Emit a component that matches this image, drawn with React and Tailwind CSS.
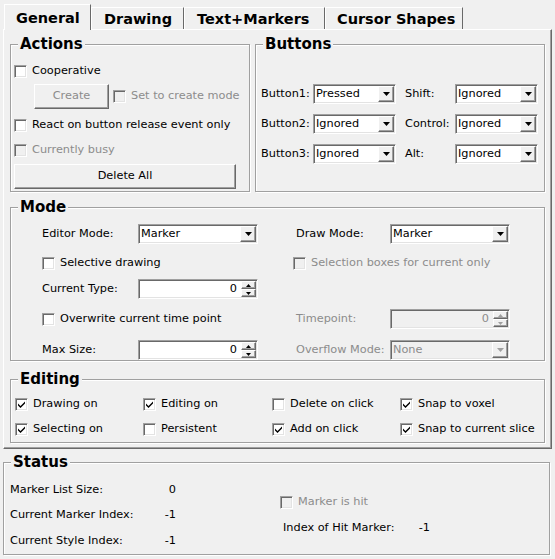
import React from 'react';

const sunken =
  'border border-t-[#a0a0a0] border-l-[#a0a0a0] border-b-white border-r-white shadow-[inset_1px_1px_0_#696969,inset_-1px_-1px_0_#e3e3e3]';
const raised =
  'border border-t-white border-l-white border-b-[#696969] border-r-[#696969] shadow-[inset_-1px_-1px_0_#a0a0a0]';

function Box({ checked, disabled }) {
  return (
    <span
      className={`w-[13px] h-[13px] shrink-0 flex items-center justify-center ${sunken} ${
        disabled ? 'bg-[#f0f0f0]' : 'bg-white'
      }`}
    >
      {checked && (
        <svg width="7" height="7" viewBox="0 0 7 7">
          <polygon points="0,2.5 2.5,5 7,0.5 7,2.5 2.5,7 0,4.5" fill="#000" />
        </svg>
      )}
    </span>
  );
}

function Check({ label, checked, disabled, className = '' }) {
  return (
    <div className={`flex items-center gap-[5px] h-[20px] ${className}`}>
      <Box checked={checked} disabled={disabled} />
      <span className={disabled ? 'text-[#8c8c8c]' : 'text-black'}>{label}</span>
    </div>
  );
}

function Arrow({ disabled }) {
  return (
    <svg width="7" height="4" viewBox="0 0 7 4">
      <polygon points="0,0 7,0 3.5,4" fill={disabled ? '#a0a0a0' : '#000'} />
    </svg>
  );
}

function Combo({ value, width, disabled }) {
  return (
    <div
      className={`h-[20px] flex items-center shrink-0 ${sunken} ${disabled ? 'bg-[#f0f0f0]' : 'bg-white'}`}
      style={{ width }}
    >
      <span className={`flex-1 pl-[2px] ${disabled ? 'text-[#8c8c8c]' : 'text-black'}`}>{value}</span>
      <span className={`w-[16px] h-[16px] mr-px flex items-center justify-center bg-[#f0f0f0] ${raised}`}>
        <Arrow disabled={disabled} />
      </span>
    </div>
  );
}

function Spin({ value, width, disabled }) {
  return (
    <div
      className={`h-[20px] flex items-center shrink-0 ${sunken} ${disabled ? 'bg-[#f0f0f0]' : 'bg-white'}`}
      style={{ width }}
    >
      <span className={`flex-1 text-right pr-[4px] ${disabled ? 'text-[#8c8c8c]' : 'text-black'}`}>{value}</span>
      <span className="w-[15px] h-[16px] mr-px flex flex-col">
        <span className={`h-[8px] flex items-center justify-center bg-[#f0f0f0] ${raised}`}>
          <svg width="5" height="3" viewBox="0 0 5 3">
            <polygon points="0,3 5,3 2.5,0" fill={disabled ? '#a0a0a0' : '#000'} />
          </svg>
        </span>
        <span className={`h-[8px] flex items-center justify-center bg-[#f0f0f0] ${raised}`}>
          <svg width="5" height="3" viewBox="0 0 5 3">
            <polygon points="0,0 5,0 2.5,3" fill={disabled ? '#a0a0a0' : '#000'} />
          </svg>
        </span>
      </span>
    </div>
  );
}

function Group({ title, className = '', children }) {
  return (
    <div
      className={`relative border border-[#a0a0a0] shadow-[1px_1px_0_#fff,inset_1px_1px_0_#fff] ${className}`}
    >
      <span className="absolute top-[-10px] left-[7px] px-[2px] bg-[#f0f0f0] font-bold text-[15px] leading-[18px] text-black">
        {title}
      </span>
      {children}
    </div>
  );
}

function Tab({ label, width, pl, active }) {
  return (
    <div
      className={`flex items-center pt-[2px] bg-[#f0f0f0] border-t border-l border-white border-r border-r-[#696969] font-bold text-[14.5px] text-black ${
        active ? 'h-[26px] -mb-px relative z-10' : 'h-[22px]'
      }`}
      style={{ width, paddingLeft: pl }}
    >
      {label}
    </div>
  );
}

export default function App() {
  return (
    <div className="w-[555px] h-[559px] bg-[#f0f0f0] font-['DejaVu_Sans',sans-serif] text-[11.3px] text-black flex flex-col overflow-hidden select-none">
      {/* tabs */}
      <div className="h-[29px] flex items-end pl-[4px] shrink-0">
        <Tab label="General" width={87} pl={11} active />
        <Tab label="Drawing" width={93} pl={12} />
        <Tab label="Text+Markers" width={141} pl={12} />
        <Tab label="Cursor Shapes" width={138} pl={11} />
      </div>

      {/* tab panel */}
      <div className="ml-[3px] w-[549px] h-[420px] shrink-0 border-t border-l border-white border-r border-b border-r-[#696969] border-b-[#696969] shadow-[inset_-1px_-1px_0_#a0a0a0] pl-[6px] pt-[14px]">
        <div className="flex gap-[5px]">
          <Group title="Actions" className="w-[240px] h-[148px]">
            <div className="flex flex-col pl-[3px]">
              <Check label="Cooperative" className="mt-[16px]" />
              <div className="mt-[3px] h-[25px] flex items-center">
                <div className={`ml-[20px] w-[75px] h-[25px] flex items-center justify-center text-[#8c8c8c] ${raised}`}>
                  Create
                </div>
                <Check label="Set to create mode" disabled className="ml-[4px]" />
              </div>
              <Check label="React on button release event only" className="mt-[6px]" />
              <Check label="Currently busy" disabled className="mt-[5px]" />
              <div className={`mt-[4px] w-[222px] h-[25px] flex items-center justify-center ${raised}`}>
                Delete All
              </div>
            </div>
          </Group>

          <Group title="Buttons" className="w-[290px] h-[148px]">
            <div className="flex flex-col pl-[5px] pt-[39px] gap-[10px]">
              {[
                ['Button1:', 'Pressed', 'Shift:'],
                ['Button2:', 'Ignored', 'Control:'],
                ['Button3:', 'Ignored', 'Alt:'],
              ].map(([a, v, b]) => (
                <div key={a} className="flex items-center h-[20px]">
                  <span className="w-[52px]">{a}</span>
                  <Combo value={v} width={83} />
                  <span className="ml-[9px] w-[50px]">{b}</span>
                  <Combo value="Ignored" width={83} />
                </div>
              ))}
            </div>
          </Group>
        </div>

        <Group title="Mode" className="mt-[15px] w-[535px] h-[154px]">
          <div className="flex flex-col pl-[31px]">
            <div className="mt-[16px] h-[20px] flex items-center">
              <div className="w-[254px] flex items-center">
                <span className="w-[96px]">Editor Mode:</span>
                <Combo value="Marker" width={120} />
              </div>
              <span className="w-[94px]">Draw Mode:</span>
              <Combo value="Marker" width={120} />
            </div>
            <div className="mt-[9px] h-[20px] flex items-center">
              <div className="w-[251px]">
                <Check label="Selective drawing" />
              </div>
              <Check label="Selection boxes for current only" disabled />
            </div>
            <div className="mt-[6px] h-[20px] flex items-center">
              <span className="w-[96px]">Current Type:</span>
              <Spin value="0" width={120} />
            </div>
            <div className="mt-[10px] h-[20px] flex items-center">
              <div className="w-[254px]">
                <Check label="Overwrite current time point" />
              </div>
              <span className="w-[94px] text-[#8c8c8c]">Timepoint:</span>
              <Spin value="0" width={120} disabled />
            </div>
            <div className="mt-[11px] h-[20px] flex items-center">
              <div className="w-[254px] flex items-center">
                <span className="w-[96px]">Max Size:</span>
                <Spin value="0" width={120} />
              </div>
              <span className="w-[94px] text-[#8c8c8c]">Overflow Mode:</span>
              <Combo value="None" width={120} disabled />
            </div>
          </div>
        </Group>

        <Group title="Editing" className="mt-[18px] w-[535px] h-[64px]">
          <div className="grid grid-cols-[128px_129px_128px_1fr] pl-[4px] pt-[14px] gap-y-[5px]">
            <Check label="Drawing on" checked />
            <Check label="Editing on" checked />
            <Check label="Delete on click" />
            <Check label="Snap to voxel" checked />
            <Check label="Selecting on" checked />
            <Check label="Persistent" />
            <Check label="Add on click" checked />
            <Check label="Snap to current slice" checked />
          </div>
        </Group>
      </div>

      {/* status */}
      <Group title="Status" className="mt-[13px] ml-[3px] w-[547px] h-[93px] shrink-0">
        <div className="flex pl-[6px]">
          <div className="w-[270px] flex flex-col pt-[17px]">
            <div className="h-[20px] flex items-center">
              <span className="w-[150px]">Marker List Size:</span>
              <span className="w-[16px] text-right">0</span>
            </div>
            <div className="mt-[5px] h-[20px] flex items-center">
              <span className="w-[150px]">Current Marker Index:</span>
              <span className="w-[16px] text-right">-1</span>
            </div>
            <div className="mt-[6px] h-[20px] flex items-center">
              <span className="w-[150px]">Current Style Index:</span>
              <span className="w-[16px] text-right">-1</span>
            </div>
          </div>
          <div className="flex flex-col pt-[29px]">
            <Check label="Marker is hit" disabled />
            <div className="mt-[6px] h-[20px] flex items-center pl-[3px]">
              <span className="w-[131px]">Index of Hit Marker:</span>
              <span className="w-[16px] text-right">-1</span>
            </div>
          </div>
        </div>
      </Group>
    </div>
  );
}
